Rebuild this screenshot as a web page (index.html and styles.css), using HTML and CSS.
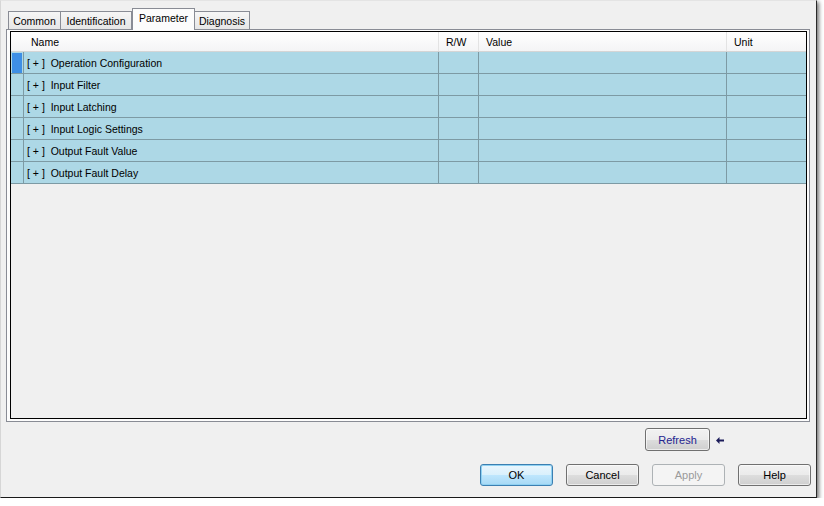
FILE: index.html
```html
<!DOCTYPE html>
<html>
<head>
<meta charset="utf-8">
<link rel="stylesheet" href="styles.css">
</head>
<body>
<div class="window">
  <div class="tabs">
    <div class="tab t-common">Common</div>
    <div class="tab t-ident">Identification</div>
    <div class="tab active t-param">Parameter</div>
    <div class="tab t-diag">Diagnosis</div>
  </div>
  <div class="panel">
    <div class="grid">
      <div class="row head">
        <div class="c rh"></div>
        <div class="c name">Name</div>
        <div class="c rw">R/W</div>
        <div class="c val">Value</div>
        <div class="c unit">Unit</div>
      </div>
      <div class="row data">
        <div class="c rh"><span class="marker"></span></div>
        <div class="c name">[ + ]&nbsp; Operation Configuration</div>
        <div class="c rw"></div><div class="c val"></div><div class="c unit"></div>
      </div>
      <div class="row data">
        <div class="c rh"></div>
        <div class="c name">[ + ]&nbsp; Input Filter</div>
        <div class="c rw"></div><div class="c val"></div><div class="c unit"></div>
      </div>
      <div class="row data">
        <div class="c rh"></div>
        <div class="c name">[ + ]&nbsp; Input Latching</div>
        <div class="c rw"></div><div class="c val"></div><div class="c unit"></div>
      </div>
      <div class="row data">
        <div class="c rh"></div>
        <div class="c name">[ + ]&nbsp; Input Logic Settings</div>
        <div class="c rw"></div><div class="c val"></div><div class="c unit"></div>
      </div>
      <div class="row data">
        <div class="c rh"></div>
        <div class="c name">[ + ]&nbsp; Output Fault Value</div>
        <div class="c rw"></div><div class="c val"></div><div class="c unit"></div>
      </div>
      <div class="row data">
        <div class="c rh"></div>
        <div class="c name">[ + ]&nbsp; Output Fault Delay</div>
        <div class="c rw"></div><div class="c val"></div><div class="c unit"></div>
      </div>
    </div>
  </div>
  <div class="refresh-row">
    <button class="btn refresh">Refresh</button>
    <svg class="arrow" width="8" height="7" viewBox="0 0 8 7"><polygon points="0,3.5 3.5,0 3.5,7" fill="#1c1c5a"/><rect x="3" y="2.5" width="5" height="2" fill="#1c1c5a"/></svg>
  </div>
  <div class="button-row">
    <button class="btn ok">OK</button>
    <button class="btn">Cancel</button>
    <button class="btn disabled">Apply</button>
    <button class="btn">Help</button>
  </div>
</div>
</body>
</html>
```
FILE: styles.css
```css
html, body {
  margin: 0;
  padding: 0;
  background: #ffffff;
}
body {
  font-family: "Liberation Sans", Arial, sans-serif;
  font-size: 10.5px;
  color: #000;
}
.window {
  width: 817px;
  box-sizing: border-box;
  background: #f0f0f0;
  border-top: 1px solid #e4e4e4;
  border-left: 1px solid #d6d6d6;
  border-right: 1px solid #2a2a2a;
  border-bottom: 1px solid #1a1a1a;
  box-shadow: 2px 2px 4px rgba(0,0,0,0.55);
  padding: 7px 6px 11px 5px;
}
.tabs {
  display: flex;
  align-items: flex-end;
  height: 22px;
  padding-left: 2px;
  position: relative;
  z-index: 2;
}
.tab {
  box-sizing: border-box;
  height: 18px;
  margin-bottom: 1px;
  border: 1px solid #898c95;
  border-bottom: none;
  background: linear-gradient(#f6f6f6, #e6e6e6);
  padding-top: 3px;
  text-align: center;
  white-space: nowrap;
  line-height: 13px;
}
.t-common { width: 53px; }
.t-ident { width: 71px; border-left: none; }
.t-param { width: 63px; }
.t-diag { width: 55px; border-left: none; }
.tab.active {
  height: 22px;
  margin-bottom: 0;
  background: #fcfcfc;
  padding-top: 3px;
}
.panel {
  box-sizing: border-box;
  margin-top: -1px;
  height: 393px;
  border: 1px solid #898c95;
  background: #fcfcfc;
  padding: 1px 2px 2px 3px;
  position: relative;
  z-index: 1;
}
.grid {
  box-sizing: border-box;
  height: 388px;
  border: 1px solid #000;
  background: #f0f0f0;
}
.row {
  display: flex;
  box-sizing: border-box;
}
.c {
  box-sizing: border-box;
  height: 100%;
  white-space: nowrap;
}
.rh { width: 13px; position: relative; }
.name { width: 415px; }
.rw { width: 40px; }
.val { width: 248px; }
.unit { width: 79px; }
.head {
  height: 20px;
  background: linear-gradient(#ffffff, #f4f4f5);
  border-bottom: 1px solid #d5d5d5;
  line-height: 21px;
}
.head .c {
  padding-left: 7px;
  border-right: 1px solid #e3e3e3;
}
.head .unit { border-right: none; }
.head .rh { padding: 0; border-right: none; }
.data {
  height: 22px;
  background: #add8e6;
  border-bottom: 1px solid #7d9aa4;
  line-height: 23px;
}
.data .c {
  border-right: 1px solid #7d9aa4;
}
.data .unit { border-right: none; }
.data .name { padding-left: 3px; }
.marker {
  position: absolute;
  left: 1px;
  top: 1px;
  width: 10px;
  height: 20px;
  background: #3e8fe6;
}
.refresh-row {
  display: flex;
  justify-content: flex-end;
  align-items: center;
  margin-top: 6px;
  height: 23px;
  padding-right: 86px;
}
.arrow {
  margin-left: 6px;
  margin-top: 1px;
}
.button-row {
  display: flex;
  justify-content: flex-end;
  gap: 13px;
  margin-top: 13px;
  margin-right: -1px;
}
.btn {
  box-sizing: border-box;
  width: 73px;
  height: 22px;
  border: 1px solid #707070;
  border-radius: 3px;
  background: linear-gradient(#f2f2f2 0%, #ebebeb 50%, #dddddd 51%, #cfcfcf 100%);
  font-family: "Liberation Sans", Arial, sans-serif;
  font-size: 11px;
  color: #000;
  padding: 0;
  margin: 0;
  box-shadow: inset 0 0 0 1px rgba(255,255,255,0.6);
}
.btn.refresh {
  width: 65px;
  height: 23px;
  color: #24248f;
}
.btn.ok {
  border-color: #3c7fb1;
  background: linear-gradient(#eaf6fd 0%, #d9f0fc 50%, #bee6fd 51%, #a7d9f5 100%);
  box-shadow: inset 0 0 0 1px #8fd1f2;
}
.btn.disabled {
  border-color: #adb2b5;
  background: #f4f4f4;
  color: #9a9a9a;
  box-shadow: none;
}
```
